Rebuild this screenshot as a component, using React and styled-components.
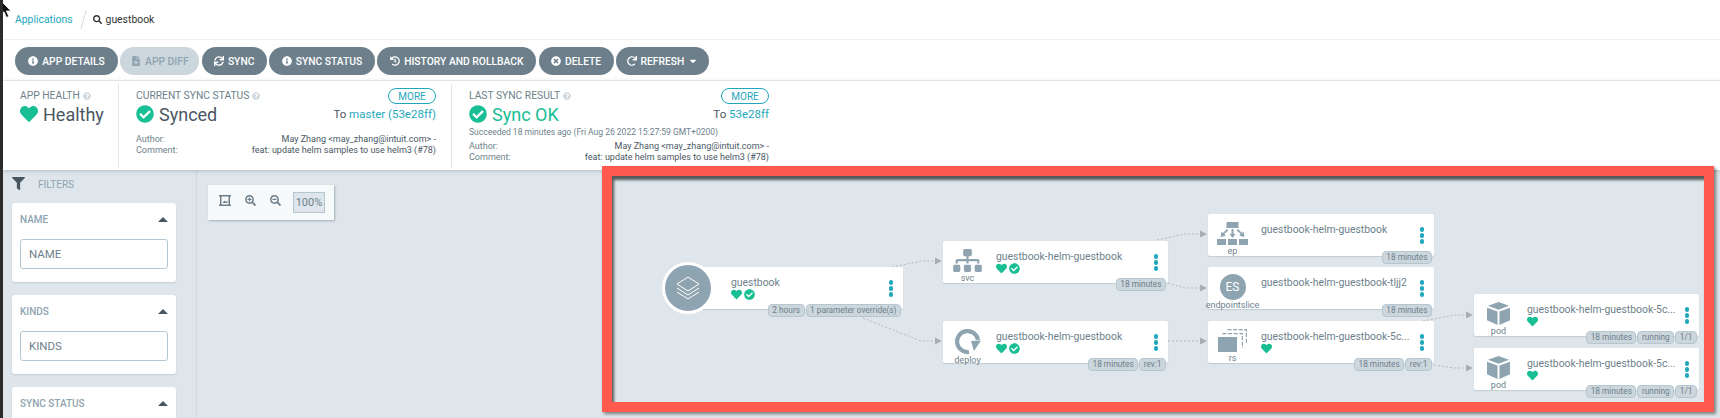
import React from "react";
import styled, { createGlobalStyle } from "styled-components";
import {
  FaInfoCircle, FaFileMedical, FaSync, FaHistory, FaTimesCircle, FaRedo, FaCaretDown,
  FaQuestionCircle, FaCheckCircle, FaHeart, FaFilter, FaSearch, FaSearchPlus, FaSearchMinus, FaSitemap,
} from "react-icons/fa";

const GlobalStyle = createGlobalStyle`
  html, body { margin: 0; padding: 0; background: #fff; }
  body { font-family: Roboto, "Liberation Sans", sans-serif; color: #495763; }
`;

const Page = styled.div`
  position: relative;
  width: 1720px;
  height: 418px;
  overflow: hidden;
  box-sizing: border-box;
  border-left: 3px solid #2b2b2b;
  display: flex;
  flex-direction: column;
`;

const Cursor = styled.svg`
  position: absolute;
  left: -3px;
  top: 0;
  z-index: 9;
`;

const Breadcrumbs = styled.div`
  height: 40px;
  flex: none;
  box-sizing: border-box;
  padding-left: 12px;
  display: flex;
  align-items: center;
  border-bottom: 1px solid #eef0f2;
`;

const Crumb = styled.a`
  color: #1ea7bd;
  font-size: 10.4px;
`;

const Slash = styled.span`
  width: 1px;
  height: 19px;
  margin: 0 9px 0 10px;
  background: #d5dadd;
  transform: rotate(16deg);
`;

const Current = styled.span`
  display: flex;
  align-items: center;
  gap: 4px;
  color: #333;
  font-size: 10.4px;
  svg { font-size: 9px; }
`;

const Toolbar = styled.div`
  height: 41px;
  flex: none;
  box-sizing: border-box;
  padding: 7px 0 0 12px;
  display: flex;
  gap: 2.33px;
  border-bottom: 1px solid #eef0f2;
`;

const ActionButton = styled.button`
  height: 28px;
  width: ${p => p.$w}px;
  padding: 0;
  border: 0;
  border-radius: 14px;
  background: ${p => (p.$off ? "#ccd6dd" : "#6d7f8b")};
  color: ${p => (p.$off ? "#8fa4b1" : "#fff")};
  font: 500 10.3px Roboto, sans-serif;
  display: flex;
  align-items: center;
  justify-content: center;
  gap: 4px;
  svg { font-size: 10px; }
`;

const StatusBar = styled.div`
  height: 89px;
  flex: none;
  display: flex;
  position: relative;
  z-index: 1;
  background: #fff;
  box-shadow: 0 1px 4px rgba(90, 105, 120, 0.35);
`;

const HealthPanel = styled.div`
  width: 115px;
  box-sizing: border-box;
  padding: 9px 0 0 17px;
`;

const SyncPanel = styled.div`
  width: 333px;
  box-sizing: border-box;
  margin: 3px 0 2px;
  padding: 4px 15px 0 17px;
  border-left: 1px solid #e3e7ea;
`;

const Title = styled.div`
  display: flex;
  align-items: center;
  gap: 3px;
  font-size: 10.3px;
  line-height: 12px;
  color: #6d7f8b;
  text-transform: uppercase;
  svg { color: #ccd6dd; font-size: 8px; }
`;

const Row = styled.div`
  display: flex;
  justify-content: space-between;
  align-items: center;
  height: ${p => p.$h}px;
`;

const MoreButton = styled.button`
  width: 48px;
  height: 16px;
  padding: 0;
  border: 1px solid #1ea7bd;
  border-radius: 8px;
  background: #fff;
  color: #1ea7bd;
  font: 400 10px Roboto, sans-serif;
`;

const BigStatus = styled.div`
  display: flex;
  align-items: center;
  gap: 5px;
  font-size: 18px;
  color: ${p => (p.$ok ? "#18be94" : "#495763")};
  svg { color: #18be94; font-size: 18px; flex: none; }
`;

const Target = styled.div`
  font-size: 11.5px;
  color: #495763;
  a { color: #1ea7bd; }
`;

const Message = styled.div`
  margin-top: 3px;
  font-size: 8.5px;
  line-height: 11px;
  color: #6d7f8b;
`;

const MetaRow = styled.div`
  margin-top: ${p => p.$top || 0}px;
  display: flex;
  justify-content: space-between;
  font-size: 9px;
  line-height: 11px;
  color: #495763;
`;

const MetaKey = styled.span`
  color: #6d7f8b;
`;

const Workspace = styled.div`
  flex: 1;
  display: flex;
  background: #dee6eb;
`;

const Sidebar = styled.div`
  width: 194px;
  flex: none;
  box-sizing: border-box;
  padding: 7px 0 0 9px;
  border-right: 1px solid #cfd8de;
`;

const FiltersHead = styled.div`
  height: 26px;
  display: flex;
  align-items: flex-start;
  gap: 13px;
  font-size: 10px;
  line-height: 16px;
  color: #8fa4b1;
  svg { font-size: 13px; color: #495763; margin-top: 0; }
`;

const FilterCard = styled.div`
  width: 164px;
  height: 79px;
  box-sizing: border-box;
  margin-bottom: 13px;
  padding: 10px 8px 0;
  border-radius: 3px;
  background: #fff;
  box-shadow: 0 1px 2px rgba(90, 105, 120, 0.2);
`;

const FilterHead = styled.div`
  display: flex;
  justify-content: space-between;
  align-items: center;
  height: 12px;
  font-size: 10px;
  font-weight: 500;
  color: #8fa4b1;
`;

const CaretUp = styled.span`
  width: 0;
  height: 0;
  border-left: 5px solid transparent;
  border-right: 5px solid transparent;
  border-bottom: 5px solid #495763;
`;

const FilterInput = styled.input`
  display: block;
  width: 148px;
  height: 30px;
  box-sizing: border-box;
  margin-top: 14px;
  padding: 0 8px;
  border: 1px solid #b5c6d0;
  border-radius: 3px;
  background: #fff;
  font: 11.5px Roboto, sans-serif;
  &::placeholder { color: #6d7f8b; opacity: 1; }
`;

const Canvas = styled.div`
  flex: 1;
  padding: 15px 0 0 11px;
`;

const ZoomBar = styled.div`
  width: 126px;
  height: 35px;
  box-sizing: border-box;
  padding: 7px 0 0 11px;
  display: flex;
  gap: 14px;
  background: #f7fafb;
  color: #6d7f8b;
  box-shadow: 1px 1px 2px rgba(90, 105, 120, 0.45);
  svg { font-size: 11px; flex: none; margin-top: 3px; }
`;

const ZoomLevel = styled.div`
  width: 32px;
  height: 21px;
  flex: none;
  margin-left: -2px;
  box-sizing: border-box;
  border: 1px solid #b5c6d0;
  background: #dee6eb;
  font-size: 11px;
  line-height: 19px;
  text-align: center;
  color: #6d7f8b;
`;

/* red annotation drawn over the screenshot, the graph is a free canvas inside it */
const Frame = styled.div`
  position: absolute;
  left: 599px;
  top: 166px;
  z-index: 3;
  width: 1112px;
  height: 246px;
  box-sizing: border-box;
  border: 10px solid #ff5a4d;
  background: #dee6eb;
  box-shadow: 2px 2px 3px rgba(0, 0, 0, 0.45), inset 2px 4px 3px rgba(40, 40, 40, 0.75);
`;

const Edges = styled.svg`
  position: absolute;
  left: 0;
  top: 0;
`;

const NodeCard = styled.div`
  position: absolute;
  left: ${p => p.$x - 612}px;
  top: ${p => p.$y - 176}px;
  width: ${p => p.$w}px;
  height: 41.5px;
  display: flex;
  border-radius: 2px;
  background: #fff;
  box-shadow: 0 1px 1px rgba(90, 105, 120, 0.2);
`;

const IconCol = styled.div`
  width: 49px;
  flex: none;
  margin-right: 4px;
  box-sizing: border-box;
  padding-top: 8px;
  display: flex;
  flex-direction: column;
  align-items: center;
  justify-content: space-between;
  color: #8fa4b1;
  svg { flex: none; }
`;

const KindLabel = styled.div`
  height: 10px;
  font-size: 9px;
  line-height: 10px;
  white-space: nowrap;
  color: #6d7f8b;
`;

const EsBadge = styled.div`
  width: 26px;
  height: 26px;
  flex: none;
  margin-top: -1px;
  border-radius: 50%;
  background: #8fa4b1;
  color: #fff;
  font-size: 12px;
  line-height: 26px;
  text-align: center;
`;

const AppCircle = styled.div`
  position: absolute;
  left: -26px;
  top: -5px;
  width: 46px;
  height: 46px;
  border: 3px solid #fff;
  border-radius: 50%;
  background: #8fa4b1;
  display: flex;
  align-items: center;
  justify-content: center;
`;

const AppSpacer = styled.div`
  width: 43px;
  flex: none;
`;

const NodeBody = styled.div`
  flex: 1;
  padding-top: 8.5px;
`;

const NodeName = styled.div`
  font-size: 10.4px;
  line-height: 13px;
  color: #6d7f8b;
  white-space: nowrap;
`;

const NodeStatus = styled.div`
  display: flex;
  align-items: center;
  gap: 2px;
  color: #18be94;
  font-size: 11px;
`;

const Dots = styled.div`
  position: absolute;
  right: 10px;
  top: 13px;
  display: flex;
  flex-direction: column;
  gap: 1.5px;
  span {
    width: 4.5px;
    height: 4.5px;
    border-radius: 50%;
    background: #1ea7bd;
  }
`;

const Tags = styled.div`
  position: absolute;
  right: 2px;
  bottom: -8px;
  display: flex;
  gap: 1px;
`;

const Tag = styled.span`
  height: 12.5px;
  box-sizing: border-box;
  padding: 0 3.5px;
  border: 1px solid #b5c6d0;
  border-radius: 4px;
  background: #ccd6dd;
  font-size: 8.3px;
  line-height: 10.5px;
  color: #6d7f8b;
  white-space: nowrap;
`;

const buttons = [
  { label: "APP DETAILS", icon: <FaInfoCircle />, w: 103 },
  { label: "APP DIFF", icon: <FaFileMedical />, w: 79, off: true },
  { label: "SYNC", icon: <FaSync />, w: 65 },
  { label: "SYNC STATUS", icon: <FaInfoCircle />, w: 106 },
  { label: "HISTORY AND ROLLBACK", icon: <FaHistory />, w: 159 },
  { label: "DELETE", icon: <FaTimesCircle />, w: 75 },
  { label: "REFRESH", icon: <FaRedo />, w: 93, caret: true },
];

const LayersIcon = () => (
  <svg width="26" height="26" viewBox="0 0 26 26" fill="none" stroke="#fff" strokeWidth="1">
    <polygon points="13,2 24,9 13,16 2,9" />
    <polyline points="2,13 13,20 24,13" />
    <polyline points="2,17 13,24 24,17" />
  </svg>
);

const EpIcon = () => (
  <svg width="31" height="23" viewBox="0 0 31 23" fill="#8fa4b1">
    <rect x="9.5" y="0" width="12" height="6" />
    <rect x="0" y="17" width="9" height="6" />
    <rect x="11" y="17" width="9" height="6" />
    <rect x="22" y="17" width="9" height="6" />
    <path d="M14.5 7h2v5h2l-3 4-3-4h2z" />
    <path d="M10 7l1.3 1.5-4 3.6 1.5 1.7-5.3 1.2 1-5.5 1.5 1.6z" />
    <path d="M21 7l-1.3 1.5 4 3.6-1.5 1.7 5.3 1.2-1-5.5-1.5 1.6z" />
  </svg>
);

const DeployIcon = () => (
  <svg width="26" height="26" viewBox="0 0 26 26" fill="none">
    <path d="M14 23A10.5 10.5 0 1 1 23 11" stroke="#8fa4b1" strokeWidth="4.2" />
    <polygon points="16,12 26,11.5 19,22" fill="#8fa4b1" />
  </svg>
);

const RsIcon = () => (
  <svg width="29" height="23" viewBox="0 0 29 23" fill="none" stroke="#8fa4b1" strokeWidth="1.2" strokeDasharray="4 1.6">
    <path d="M9.5 0.6H28.4V15" />
    <path d="M4.5 4.6H24.4V19" />
    <rect x="0" y="8" width="19" height="15" fill="#8fa4b1" stroke="none" />
  </svg>
);

const PodIcon = () => (
  <svg width="23" height="23" viewBox="0 0 24 24" fill="#8fa4b1">
    <polygon points="12,0 23,4 12,8 1,4" />
    <polygon points="0,6 11,10 11,24 0,19" />
    <polygon points="24,6 13,10 13,24 24,19" />
  </svg>
);

const FitIcon = () => (
  <svg width="12" height="11" viewBox="0 0 12 11" fill="currentColor">
    <path d="M0 0h12v1.6h-1V9.4h1V11H0V9.4h1V1.6H0zM2.5 1.6v7.8h7V1.6z" />
    <path d="M3.5 8l2-2.5 1.5 1.5 1.5-1.5v2.5z" />
  </svg>
);

const SvcIcon = styled(FaSitemap)`
  width: 29px;
  height: 23px;
`;

const pods = { x: 1474, w: 225, name: "guestbook-helm-guestbook-5c...", health: true, kind: "pod", icon: <PodIcon /> };

const nodes = [
  { x: 943, y: 241, w: 225, name: "guestbook-helm-guestbook", health: true, sync: true, kind: "svc",
    icon: <SvcIcon />, tags: ["18 minutes"] },
  { x: 943, y: 321, w: 225, name: "guestbook-helm-guestbook", health: true, sync: true, kind: "deploy",
    icon: <DeployIcon />, tags: ["18 minutes", "rev:1"] },
  { x: 1208, y: 214, w: 226, name: "guestbook-helm-guestbook", kind: "ep", icon: <EpIcon />, tags: ["18 minutes"] },
  { x: 1208, y: 267, w: 226, name: "guestbook-helm-guestbook-tljj2", kind: "endpointslice",
    icon: <EsBadge>ES</EsBadge>, tags: ["18 minutes"] },
  { x: 1208, y: 321, w: 226, name: "guestbook-helm-guestbook-5c...", health: true, kind: "rs",
    icon: <RsIcon />, tags: ["18 minutes", "rev:1"] },
  { ...pods, y: 294, tags: ["18 minutes", "running", "1/1"] },
  { ...pods, y: 348, tags: ["18 minutes", "running", "1/1"] },
];

const edges = [
  { points: "892,267 922,261 935,261", arrow: [935, 261] },
  { points: "863,318 921,341 935,341", arrow: [935, 341] },
  { points: "1157,240 1185,234 1200,234", arrow: [1200, 234] },
  { points: "1168,283 1185,288 1200,288", arrow: [1200, 288] },
  { points: "1168,341 1200,341", arrow: [1200, 341] },
  { points: "1423,321 1455,315 1466,315", arrow: [1466, 315] },
  { points: "1434,365 1455,368 1466,368", arrow: [1466, 368] },
];

const NodeTags = ({ tags }) => (
  <Tags>
    {tags.map(tag => <Tag key={tag}>{tag}</Tag>)}
  </Tags>
);

const MoreDots = () => (
  <Dots>
    <span /><span /><span />
  </Dots>
);

const Graph = () => (
  <Frame>
    <Edges width="1092" height="226" viewBox="612 176 1092 226">
      {edges.map(edge => (
        <g key={edge.points}>
          <polyline points={edge.points} fill="none" stroke="#b4b8bb" strokeWidth="1" strokeDasharray="2 2" />
          <polygon
            points={`${edge.arrow[0]},${edge.arrow[1] - 3.5} ${edge.arrow[0] + 7},${edge.arrow[1]} ${edge.arrow[0]},${edge.arrow[1] + 3.5}`}
            fill="#a9adb0"
          />
        </g>
      ))}
    </Edges>

    <NodeCard $x={688} $y={267} $w={215}>
      <AppCircle><LayersIcon /></AppCircle>
      <AppSpacer />
      <NodeBody>
        <NodeName>guestbook</NodeName>
        <NodeStatus><FaHeart /><FaCheckCircle /></NodeStatus>
      </NodeBody>
      <MoreDots />
      <NodeTags tags={["2 hours", "1 parameter override(s)"]} />
    </NodeCard>

    {nodes.map(node => (
      <NodeCard key={node.y + node.kind} $x={node.x} $y={node.y} $w={node.w}>
        <IconCol>
          {node.icon}
          <KindLabel>{node.kind}</KindLabel>
        </IconCol>
        <NodeBody>
          <NodeName>{node.name}</NodeName>
          {node.health && (
            <NodeStatus>
              <FaHeart />
              {node.sync && <FaCheckCircle />}
            </NodeStatus>
          )}
        </NodeBody>
        <MoreDots />
        <NodeTags tags={node.tags} />
      </NodeCard>
    ))}
  </Frame>
);

const App = () => (
  <>
    <GlobalStyle />
    <Page>
      <Cursor width="12" height="20" viewBox="0 0 12 20">
        <path d="M0.5 0.5V15l3.5-3.2 2.4 5.6 2.4-1-2.4-5.4h4.6z" fill="#111" stroke="#fff" strokeWidth="0.8" />
      </Cursor>

      <Breadcrumbs>
        <Crumb>Applications</Crumb>
        <Slash />
        <Current><FaSearch />guestbook</Current>
      </Breadcrumbs>

      <Toolbar>
        {buttons.map(b => (
          <ActionButton key={b.label} $w={b.w} $off={b.off}>
            {b.icon}{b.label}{b.caret && <FaCaretDown />}
          </ActionButton>
        ))}
      </Toolbar>

      <StatusBar>
        <HealthPanel>
          <Title>App Health <FaQuestionCircle /></Title>
          <Row $h={24}>
            <BigStatus><FaHeart />Healthy</BigStatus>
          </Row>
        </HealthPanel>

        <SyncPanel>
          <Row $h={16}>
            <Title>Current Sync Status <FaQuestionCircle /></Title>
            <MoreButton>MORE</MoreButton>
          </Row>
          <Row $h={20}>
            <BigStatus><FaCheckCircle />Synced</BigStatus>
            <Target>To <a>master (53e28ff)</a></Target>
          </Row>
          <MetaRow $top={10}><MetaKey>Author:</MetaKey><span>May Zhang &lt;may_zhang@intuit.com&gt; -</span></MetaRow>
          <MetaRow><MetaKey>Comment:</MetaKey><span>feat: update helm samples to use helm3 (#78)</span></MetaRow>
        </SyncPanel>

        <SyncPanel>
          <Row $h={16}>
            <Title>Last Sync Result <FaQuestionCircle /></Title>
            <MoreButton>MORE</MoreButton>
          </Row>
          <Row $h={20}>
            <BigStatus $ok><FaCheckCircle />Sync OK</BigStatus>
            <Target>To <a>53e28ff</a></Target>
          </Row>
          <Message>Succeeded 18 minutes ago (Fri Aug 26 2022 15:27:59 GMT+0200)</Message>
          <MetaRow $top={3}><MetaKey>Author:</MetaKey><span>May Zhang &lt;may_zhang@intuit.com&gt; -</span></MetaRow>
          <MetaRow><MetaKey>Comment:</MetaKey><span>feat: update helm samples to use helm3 (#78)</span></MetaRow>
        </SyncPanel>
      </StatusBar>

      <Workspace>
        <Sidebar>
          <FiltersHead><FaFilter />FILTERS</FiltersHead>
          {["NAME", "KINDS", "SYNC STATUS"].map(name => (
            <FilterCard key={name}>
              <FilterHead>{name}<CaretUp /></FilterHead>
              <FilterInput placeholder={name} />
            </FilterCard>
          ))}
        </Sidebar>
        <Canvas>
          <ZoomBar>
            <FitIcon />
            <FaSearchPlus />
            <FaSearchMinus />
            <ZoomLevel>100%</ZoomLevel>
          </ZoomBar>
        </Canvas>
      </Workspace>

      <Graph />
    </Page>
  </>
);

export default App;
